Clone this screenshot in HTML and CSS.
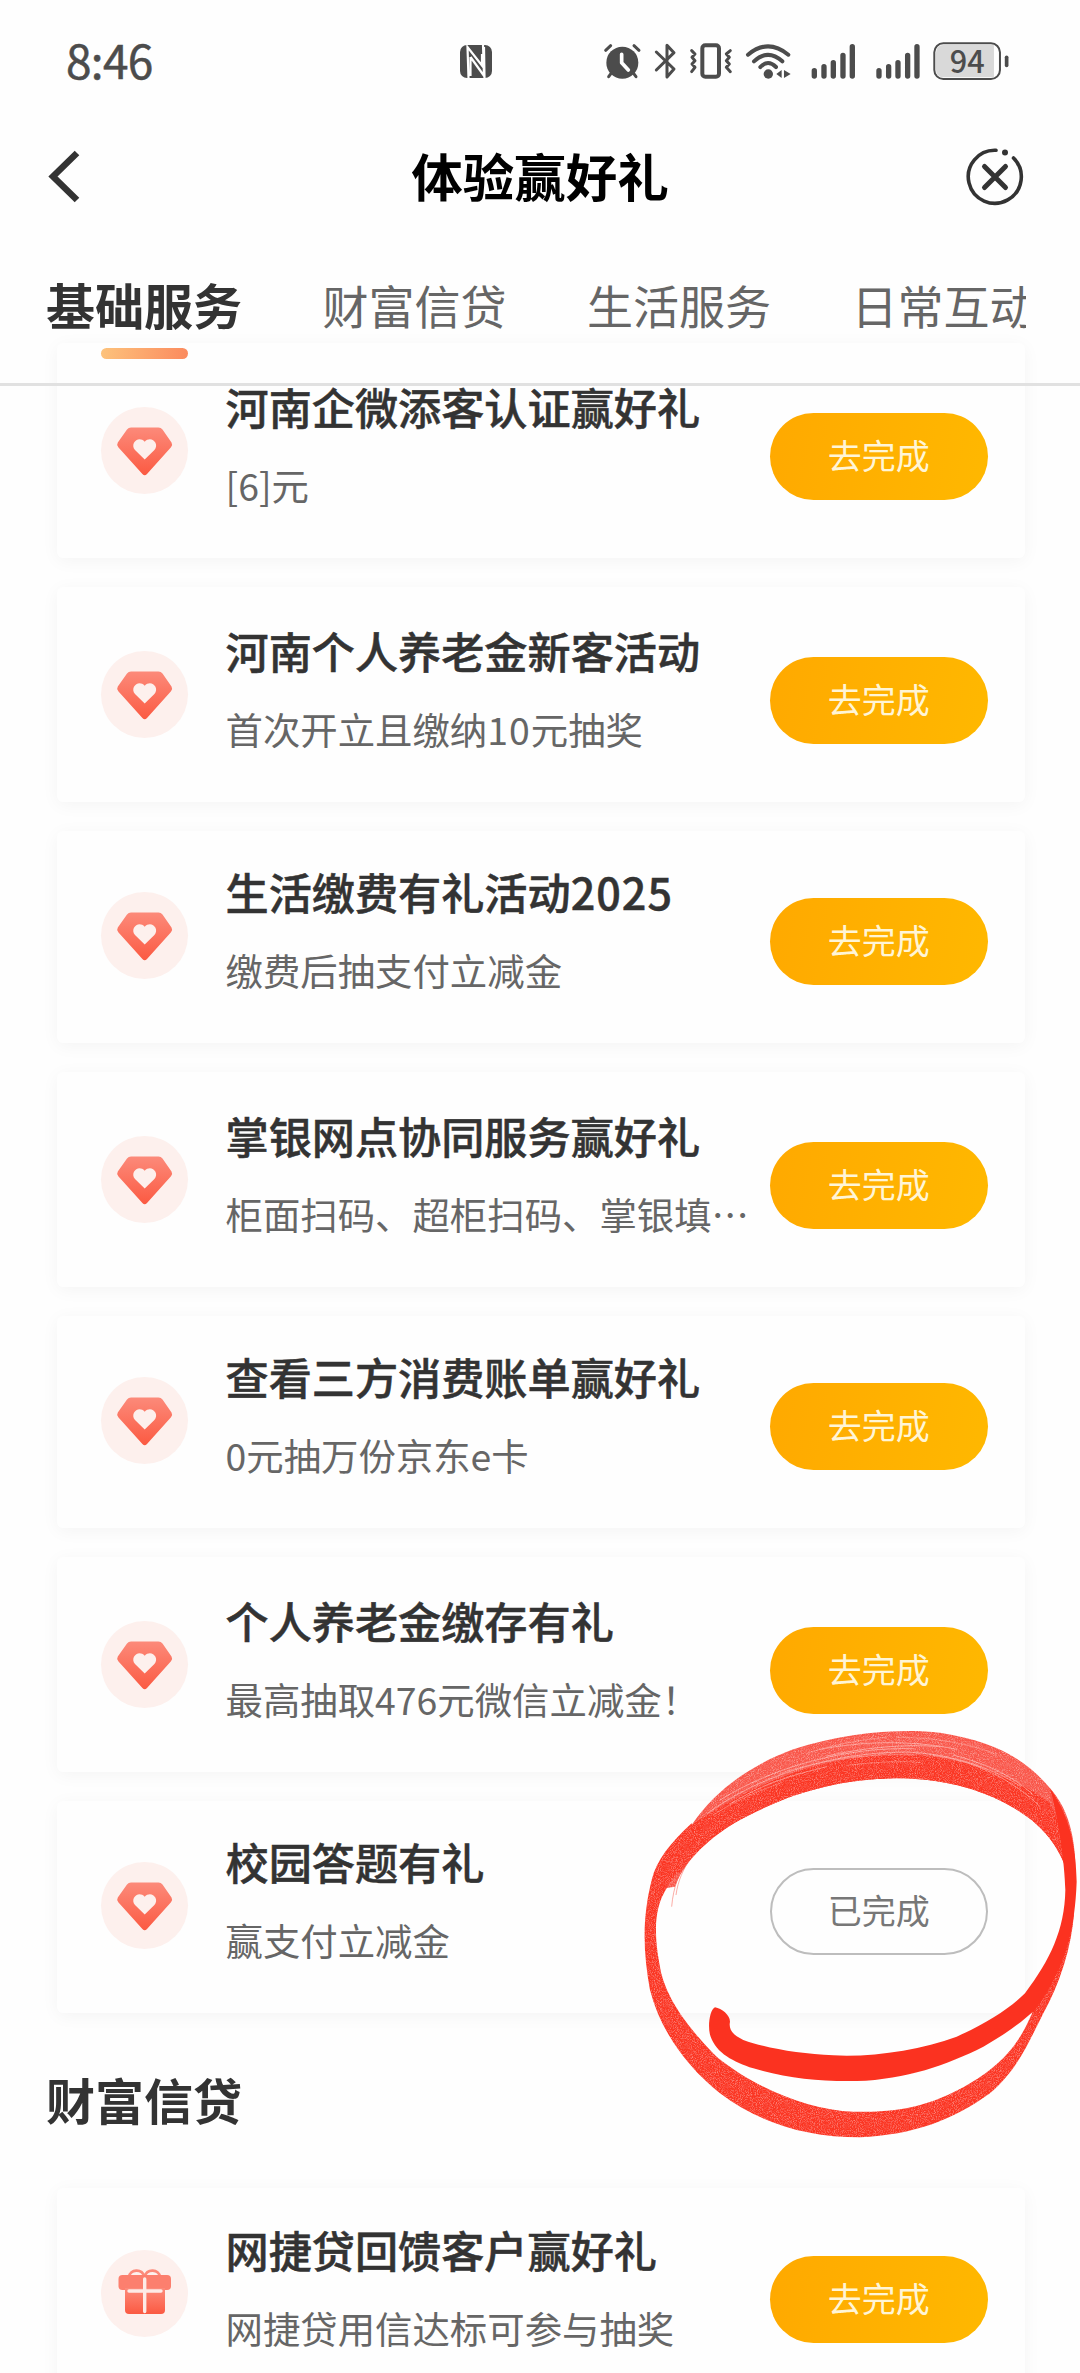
FILE: index.html
```html
<!DOCTYPE html>
<html lang="zh-CN">
<head>
<meta charset="utf-8">
<title>体验赢好礼</title>
<link rel="stylesheet" href="styles.css">
</head>
<body>
<svg class="defs" width="0" height="0" aria-hidden="true">
  <defs>
    <linearGradient id="coral" x1="0" y1="0" x2="0" y2="1">
      <stop offset="0" stop-color="#fc8a7a"/><stop offset="1" stop-color="#fb5a42"/>
    </linearGradient>
    <symbol id="gem" viewBox="0 0 87 87">
      <path fill="url(#coral)" d="M30 20.500h27.500q2.500 0 4 2l9 13q1.500 2.500-.5 4.700L46 67q-2.300 2.400-4.600 0L17.300 40.200q-2-2.200-.5-4.700l9.200-13q1.500-2 4-2z"/>
      <path fill="#fdf0ed" d="M43.700 52.500 34 43c-5.500-6.500 3.500-15 9.700-8.300C50 28 59 36.500 53.400 43z"/>
    </symbol>
    <symbol id="gift" viewBox="0 0 87 87">
      <path fill="none" stroke="#fc8a7a" stroke-width="2.600" d="M28 27c1-8 13-9 15.500 0C46 18 58 19 59 27"/>
      <rect x="17.500" y="25" width="52.500" height="15" rx="4" fill="#fc7f6e"/>
      <path fill="url(#coral)" d="M24 38h40v22q0 4-4 4H28q-4 0-4-4z"/>
      <path stroke="#fdebe7" stroke-width="3.400" stroke-linecap="round" d="M43.700 29v32.500M28 41h32"/>
    </symbol>
  </defs>
</svg>

<div class="screen">
  <header class="header">
    <div class="status">
      <span class="clock">8:46</span>
      <svg class="nfc" viewBox="0 0 32 33"><rect width="32" height="33" rx="7" fill="#4c4c4c"/><path fill="none" stroke="#fff" stroke-width="2.200" d="M8.500 33 7.500 2 22 20.500V9M10.500 12v19M24.500 33 24 2M10.500 12l14 19.500M23 0l1 31"/></svg>
      <svg class="indicators" viewBox="72 36 1216 116">
        <g fill="none" stroke="#4c4c4c" stroke-linecap="round" stroke-linejoin="round">
          <circle cx="127" cy="98" r="48" fill="#4c4c4c" stroke="none"/>
          <path stroke-width="9" d="M77 61 92 47M177 61 162 47M95 128l-9 12M159 128l9 12"/>
          <path stroke="#fff" stroke-width="11" d="M125 73v25l20 22"/>
          <path stroke-width="9" d="m229 66 53 51-21 24V46l21 22-53 52"/>
          <rect x="367" y="46" width="50" height="94" rx="9" stroke-width="12"/>
          <path stroke-width="9" d="m335 62 10 10-9 10 9 10-9 10 9 10-10 13M451 62l-12 10 9 10-9 10 9 10-9 10 12 13"/>
          <path stroke-width="12" d="M504 74q60-50 121 0M522 94q42-39 85 0M541 111q23-24 47 0"/>
          <path stroke-width="16" d="M703 122v16M732 110v28M760 98v40M789 76v62M817 50v88M897 122v16M926 110v28M954 98v40M983 76v62M1011 50v88"/>
          <rect x="1063" y="40" width="197" height="107" rx="27" stroke-width="6" fill="#fff"/>
          <path fill="#d9d9d9" stroke="none" d="M1090 45h152v97h-152q-22 0-22-24V69q0-24 22-24z"/>
          <path stroke-width="11" d="M1280 82v24"/>
        </g>
        <g fill="#4c4c4c"><circle cx="565" cy="132" r="14"/><path d="m589 132 16-12v24zM612 120l20 12-20 12z"/></g>
        <text x="1162" y="129" class="battery">94</text>
      </svg>
    </div>
    <div class="titlebar">
      <svg class="back" viewBox="0 0 32 49"><path fill="none" stroke="#333" stroke-width="6.500" d="M29 1 5 24.500 29 48"/></svg>
      <h1>体验赢好礼</h1>
      <svg class="close" viewBox="0 0 58 58"><g fill="none" stroke="#333" stroke-width="3.600" stroke-linecap="round"><path d="M30 2.300A26.500 26.500 0 1 0 47.500 10"/><path stroke-width="5" d="m18.500 18.500 21 21M39.500 18.500l-21 21"/></g><circle cx="39" cy="4.500" r="3" fill="#333"/></svg>
    </div>
    <nav class="tabs">
      <a class="tab active">基础服务</a><a class="tab">财富信贷</a><a class="tab">生活服务</a><a class="tab">日常互动</a>
    </nav>
  </header>

  <main>
    <section class="list">
      <article class="card"><div class="icon"><svg><use href="#gem"/></svg></div><div class="info"><h2>河南企微添客认证赢好礼</h2><p>[6]元</p></div><a class="btn">去完成</a></article>
      <article class="card"><div class="icon"><svg><use href="#gem"/></svg></div><div class="info"><h2>河南个人养老金新客活动</h2><p>首次开立且缴纳<span class="num">10</span>元抽奖</p></div><a class="btn">去完成</a></article>
      <article class="card"><div class="icon"><svg><use href="#gem"/></svg></div><div class="info"><h2>生活缴费有礼活动<span class="num">2025</span></h2><p>缴费后抽支付立减金</p></div><a class="btn">去完成</a></article>
      <article class="card"><div class="icon"><svg><use href="#gem"/></svg></div><div class="info"><h2>掌银网点协同服务赢好礼</h2><p>柜面扫码、超柜扫码、掌银填…</p></div><a class="btn">去完成</a></article>
      <article class="card"><div class="icon"><svg><use href="#gem"/></svg></div><div class="info"><h2>查看三方消费账单赢好礼</h2><p>0元抽万份京东e卡</p></div><a class="btn">去完成</a></article>
      <article class="card"><div class="icon"><svg><use href="#gem"/></svg></div><div class="info"><h2>个人养老金缴存有礼</h2><p>最高抽取476元微信立减金！</p></div><a class="btn">去完成</a></article>
      <article class="card"><div class="icon"><svg><use href="#gem"/></svg></div><div class="info"><h2>校园答题有礼</h2><p>赢支付立减金</p></div><a class="btn done">已完成</a></article>
    </section>
    <h3 class="section-title">财富信贷</h3>
    <section class="list">
      <article class="card last"><div class="icon"><svg><use href="#gift"/></svg></div><div class="info"><h2>网捷贷回馈客户赢好礼</h2><p>网捷贷用信达标可参与抽奖</p></div><a class="btn">去完成</a></article>
    </section>
  </main>

  <svg class="marker" viewBox="0 0 1380 1380">
    <defs>
      <filter id="grain" x="0" y="0" width="100%" height="100%">
        <feTurbulence type="fractalNoise" baseFrequency="0.35" numOctaves="2" seed="4" result="n"/>
        <feColorMatrix in="n" type="matrix" values="0 0 0 0 0  0 0 0 0 0  0 0 0 0 0  -1 0 0 0 1.430" result="m"/>
        <feComposite in="SourceGraphic" in2="m" operator="in"/>
      </filter>
    </defs>
    <g filter="url(#grain)" fill="#fb3524">
      <path fill="#f9564a" d="M215 375C300 250 420 185 520 148C680 95 850 85 960 98C1130 125 1220 180 1290 265C1340 320 1365 400 1366 500L1336 500C1310 430 1270 390 1235 360C1130 280 1000 240 850 235C700 235 600 260 500 295C400 335 320 375 260 430C205 480 180 520 165 560L135 565L150 450Z"/>
      <path d="M215 370C150 430 110 480 95 540C65 660 70 760 90 870C120 990 200 1100 300 1180C420 1270 560 1312 720 1312C880 1305 1000 1260 1110 1180C1190 1110 1220 1040 1270 940C1320 850 1355 740 1362 640L1330 700C1300 790 1265 850 1240 930C1200 1030 1150 1090 1050 1150C950 1210 850 1240 700 1235C560 1230 400 1160 290 1070C190 970 130 880 118 790C100 690 105 620 140 565C165 520 200 480 260 430Z"/>
      <path d="M215 375C400 250 600 165 850 163C1050 170 1200 240 1290 310L1366 480L1336 500C1310 430 1270 390 1235 360C1130 280 1000 240 850 235C700 235 600 260 500 295C400 335 320 375 260 430C230 455 200 490 180 520L130 500Z"/>
    </g>
    <path fill="#fb3220" d="M285 922C268 930 262 985 272 1010C290 1060 340 1085 400 1105C500 1135 600 1145 710 1143C860 1138 980 1095 1090 1040C1160 1000 1200 970 1245 930C1340 800 1365 680 1370 545C1368 440 1350 350 1290 265C1318 370 1334 490 1336 570C1334 690 1290 780 1215 880C1170 925 1100 970 1010 1010C900 1050 760 1072 640 1066C540 1062 440 1045 370 1020C340 1005 325 990 330 965C330 945 305 925 285 922Z"/>
    <g fill="none" stroke="#fff" stroke-width="3" stroke-linecap="round" opacity=".4">
      <path d="M262 340C420 225 640 158 850 156C980 158 1110 200 1200 258M300 300C460 200 680 140 880 146M600 148C760 118 900 125 1010 148M940 166C1060 180 1180 240 1260 320M330 312C440 245 520 225 620 200M620 168C720 145 850 130 960 140M1000 165C1090 190 1170 220 1240 285"/>
      <path stroke-width="2" d="M480 220C620 175 760 160 880 165M680 196C780 185 860 182 900 188M280 345C340 305 420 270 480 250M830 112C930 112 1060 130 1130 165M560 160C640 135 720 118 800 112"/>
    </g>
    <path fill="none" stroke="#f95a4c" stroke-width="2.500" opacity=".6" d="M195 490C178 520 160 560 155 620M210 475C190 510 174 540 168 585"/>
  </svg>
</div>
</body>
</html>
```

FILE: styles.css
```css
* { box-sizing: border-box; }
body, h1, h2, h3, p { margin: 0; }
body {
  background: #fefefe;
  font-family: "Noto Sans CJK SC", sans-serif;
  color: #333;
}
svg { display: block; overflow: visible; }
.defs { position: absolute; }
.screen {
  position: relative;
  width: 1080px;
  height: 2373px;
  overflow: hidden;
}

.header {
  position: relative;
  z-index: 1;
  display: flex;
  flex-direction: column;
  height: 386px;
  border-bottom: 3px solid #e1e1e1;
}
.status {
  display: flex;
  align-items: center;
  height: 123px;
  padding-left: 66px;
}
.clock {
  width: 394px;
  margin-bottom: 5px;
  font-size: 46px;
  line-height: 60px;
  letter-spacing: -.7px;
  color: #4c4c4c;
  -webkit-text-stroke: .5px #4c4c4c;
}
.nfc { width: 32px; height: 33px; }
.indicators { width: 405.300px; height: 38.700px; margin-left: 112px; }
.battery {
  font: 500 92px "Noto Sans CJK SC", sans-serif;
  fill: #4c4c4c;
  text-anchor: middle;
}
.titlebar {
  display: flex;
  align-items: center;
  justify-content: space-between;
  height: 107px;
  padding: 0 56px 0 48px;
}
.titlebar h1 {
  margin-bottom: 4px;
  font-size: 51.500px;
  line-height: 76px;
  font-weight: 700;
  color: #000;
}
.back { width: 32px; height: 49px; margin-right: 34px; }
.close { width: 58px; height: 58px; }
.tabs {
  display: flex;
  align-items: flex-start;
  gap: 80.500px;
  margin: 36px 54px 0 46px;
  height: 117px;
  overflow: hidden;
  white-space: nowrap;
}
.tab {
  flex: none;
  font-size: 46px;
  line-height: 76px;
  color: #666;
}
.tab.active {
  display: flex;
  flex-direction: column;
  align-items: center;
  font-size: 49px;
  font-weight: 700;
  color: #333;
}
.tab.active::after {
  content: "";
  width: 87px;
  height: 11px;
  margin-top: 6px;
  border-radius: 6px;
  background: linear-gradient(100deg, #fdc37c, #fb8a5e);
}

.list {
  display: flex;
  flex-direction: column;
  gap: 29px;
  padding: 0 55px 0 57px;
}
main > .list:first-child { margin-top: -43px; }
.card {
  display: flex;
  align-items: center;
  height: 212px;
  padding: 9px 37px 0 43.500px;
  border-radius: 6px;
  background: #fefefe;
  box-shadow: 0 3px 18px rgba(0, 0, 0, .045);
}
.card:nth-child(even) { height: 215px; padding-top: 12px; }
.card:first-child { height: 215px; padding-top: 12px; }
.card.last { height: 213px; padding-top: 10px; }
.icon {
  flex: none;
  width: 87px;
  height: 87px;
  margin-bottom: 12px;
  border-radius: 50%;
  background: #fdf0ed;
}
.icon svg { width: 87px; height: 87px; }
.info {
  flex: 1;
  margin: 0 0 28px 38px;
  white-space: nowrap;
}
.info h2 {
  font-size: 43.150px;
  line-height: 60px;
  font-weight: 500;
  -webkit-text-stroke: .5px #333;
}
.num { letter-spacing: 1px; }
.info p {
  margin-top: 24px;
  font-size: 37.400px;
  line-height: 50px;
  color: #666;
}
.btn {
  flex: none;
  display: flex;
  align-items: center;
  justify-content: center;
  width: 218.500px;
  height: 87px;
  padding-bottom: 4px;
  border-radius: 44px;
  background: linear-gradient(100deg, #ffa900, #ffb800);
  font-size: 34px;
  line-height: 50px;
  color: #fff5d6;
}
.btn.done {
  border: 2px solid #bdbdbd;
  background: none;
  color: #777;
}
.section-title {
  padding: 48px 46px 51px;
  font-size: 49px;
  line-height: 76px;
  font-weight: 700;
}

.marker {
  position: absolute;
  left: 620px;
  top: 1700px;
  width: 460px;
  height: 460px;
}
```
